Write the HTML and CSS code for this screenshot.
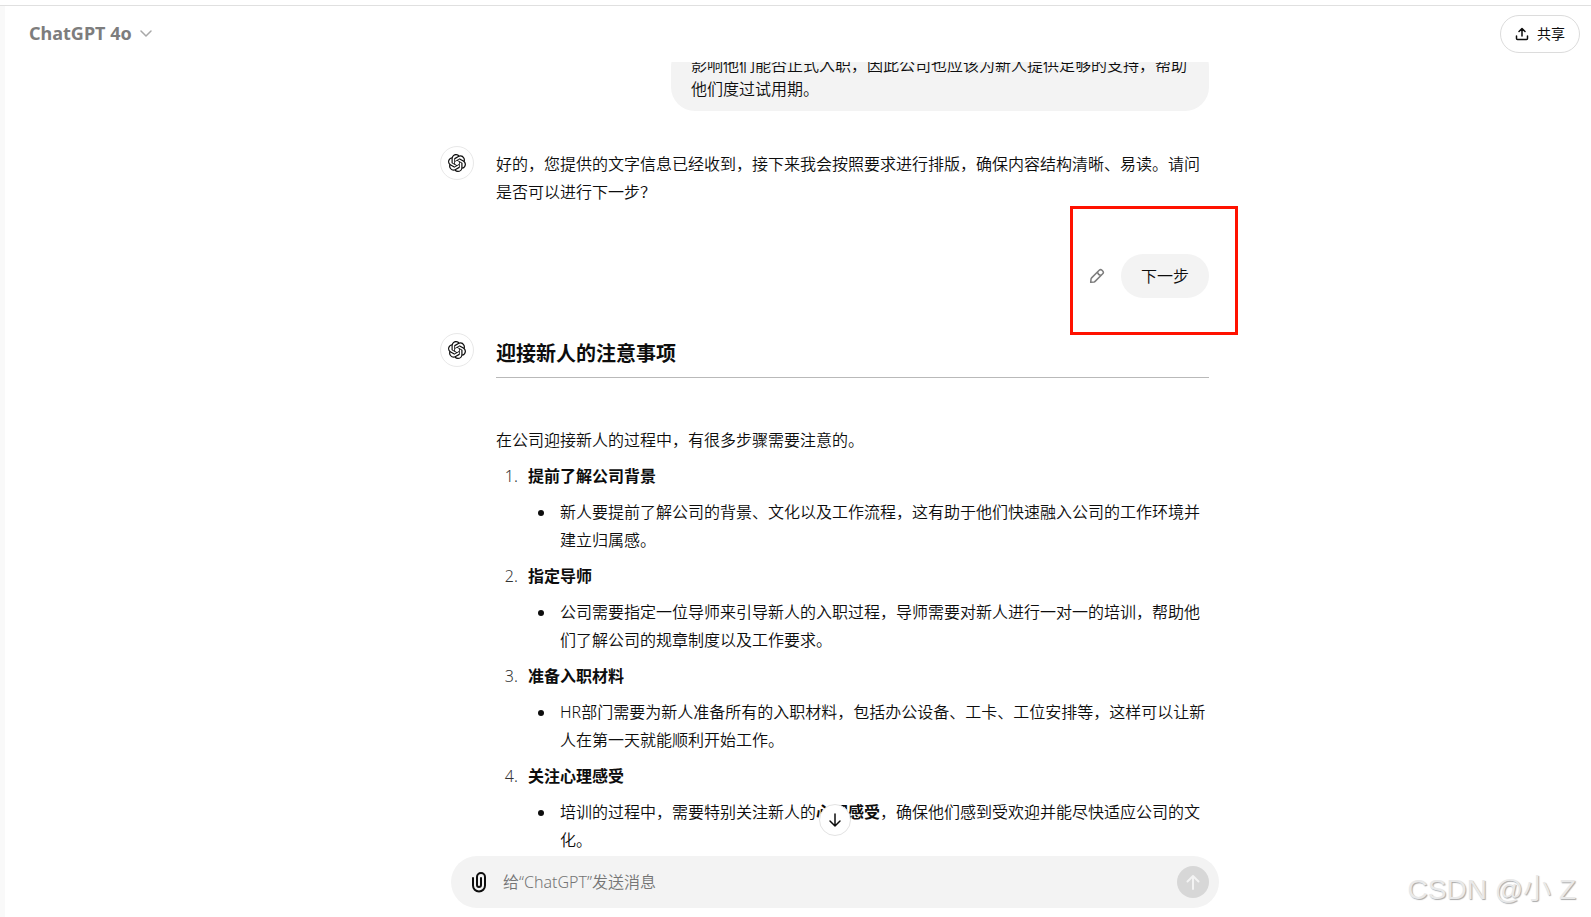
FILE: index.html
```
<!DOCTYPE html>
<html lang="zh-CN">
<head>
    <meta charset="UTF-8">
    <meta name="viewport" content="width=device-width, initial-scale=1.0">
    <title>ChatGPT</title>
    <link rel="stylesheet" href="styles.css">
</head>
<body>
    <svg class="defs" width="0" height="0" aria-hidden="true">
        <symbol id="logo" viewBox="0 0 24 24">
            <path d="M22.2819 9.8211a5.9847 5.9847 0 0 0-.5157-4.9108 6.0462 6.0462 0 0 0-6.5098-2.9A6.0651 6.0651 0 0 0 4.9807 4.1818a5.9847 5.9847 0 0 0-3.9977 2.9 6.0462 6.0462 0 0 0 .7427 7.0966 5.98 5.98 0 0 0 .511 4.9107 6.051 6.051 0 0 0 6.5146 2.9001A5.9847 5.9847 0 0 0 13.2599 24a6.0557 6.0557 0 0 0 5.7718-4.2058 5.9894 5.9894 0 0 0 3.9977-2.9001 6.0557 6.0557 0 0 0-.7475-7.0729zm-9.022 12.6081a4.4755 4.4755 0 0 1-2.8764-1.0408l.1419-.0804 4.7783-2.7582a.7948.7948 0 0 0 .3927-.6813v-6.7369l2.02 1.1686a.071.071 0 0 1 .038.052v5.5826a4.504 4.504 0 0 1-4.4945 4.4944zm-9.6607-4.1254a4.4708 4.4708 0 0 1-.5346-3.0137l.142.0852 4.783 2.7582a.7712.7712 0 0 0 .7806 0l5.8428-3.3685v2.3324a.0804.0804 0 0 1-.0332.0615L9.74 19.9502a4.4992 4.4992 0 0 1-6.1408-1.6464zM2.3408 7.8956a4.485 4.485 0 0 1 2.3655-1.9728V11.6a.7664.7664 0 0 0 .3879.6765l5.8144 3.3543-2.0201 1.1685a.0757.0757 0 0 1-.071 0l-4.8303-2.7865A4.504 4.504 0 0 1 2.3408 7.872zm16.5963 3.8558L13.1038 8.364 15.1192 7.2a.0757.0757 0 0 1 .071 0l4.8303 2.7913a4.4944 4.4944 0 0 1-.6765 8.1042v-5.6772a.79.79 0 0 0-.407-.667zm2.0107-3.0231l-.142-.0852-4.7735-2.7818a.7759.7759 0 0 0-.7854 0L9.409 9.2297V6.8974a.0662.0662 0 0 1 .0284-.0615l4.8303-2.7866a4.4992 4.4992 0 0 1 6.6802 4.66zM8.3065 12.863l-2.02-1.1638a.0804.0804 0 0 1-.038-.0567V6.0742a4.4992 4.4992 0 0 1 7.3757-3.4537l-.142.0805L8.704 5.459a.7948.7948 0 0 0-.3927.6813zm1.0976-2.3654l2.602-1.4998 2.6069 1.4998v2.9994l-2.5974 1.4997-2.6067-1.4997Z"/>
        </symbol>
    </svg>

    <div class="app">
        <aside class="sidebar"></aside>
        <main class="main">
            <header class="header">
                <button class="model" type="button">
                    ChatGPT 4o
                    <svg width="12" height="12" viewBox="0 0 12 12"><path d="M1 4l5 5 5-5"/></svg>
                </button>
                <button class="share" type="button">
                    <svg width="14" height="14" viewBox="0 0 14 14"><path d="M7 9V2M4 4.500L7 1.500l3 3M1.500 9v2.500a1 1 0 0 0 1 1h9a1 1 0 0 0 1-1V9"/></svg>
                    共享
                </button>
            </header>

            <section class="thread">
                <div class="column">
                    <div class="turn-user first">
                        <div class="bubble">影响他们能否正式入职，因此公司也应该为新人提供足够的支持，帮助他们度过试用期。</div>
                    </div>

                    <article class="turn">
                        <div class="avatar"><svg width="18" height="18"><use href="#logo"/></svg></div>
                        <div class="content">
                            <p>好的，您提供的文字信息已经收到，接下来我会按照要求进行排版，确保内容结构清晰、易读。请问是否可以进行下一步？</p>
                        </div>
                    </article>

                    <div class="turn-user next">
                        <button class="edit" type="button" aria-label="编辑">
                            <svg width="16" height="16" viewBox="0 0 16 16"><path d="M10.200 2.300a2 2 0 0 1 2.800 0l.7.700a2 2 0 0 1 0 2.800l-7.600 7.600a2 2 0 0 1-1 .550L1.700 14.300l.350-3.400a2 2 0 0 1 .550-1zM8.600 3.900c.2 2 1.500 3.300 3.500 3.500"/></svg>
                        </button>
                        <div class="bubble">下一步</div>
                        <div class="highlight"></div>
                    </div>

                    <article class="turn">
                        <div class="avatar"><svg width="18" height="18"><use href="#logo"/></svg></div>
                        <div class="content">
                            <h3>迎接新人的注意事项</h3>
                            <hr>
                            <p>在公司迎接新人的过程中，有很多步骤需要注意的。</p>
                            <ol>
                                <li>
                                    <strong>提前了解公司背景</strong>
                                    <ul><li>新人要提前了解公司的背景、文化以及工作流程，这有助于他们快速融入公司的工作环境并建立归属感。</li></ul>
                                </li>
                                <li>
                                    <strong>指定导师</strong>
                                    <ul><li>公司需要指定一位导师来引导新人的入职过程，导师需要对新人进行一对一的培训，帮助他们了解公司的规章制度以及工作要求。</li></ul>
                                </li>
                                <li>
                                    <strong>准备入职材料</strong>
                                    <ul><li>HR部门需要为新人准备所有的入职材料，包括办公设备、工卡、工位安排等，这样可以让新人在第一天就能顺利开始工作。</li></ul>
                                </li>
                                <li>
                                    <strong>关注心理感受</strong>
                                    <ul><li>培训的过程中，需要特别关注新人的<strong>心理感受</strong>，确保他们感到受欢迎并能尽快适应公司的文化。</li></ul>
                                </li>
                            </ol>
                        </div>
                    </article>
                </div>
            </section>

            <footer class="footer">
                <form class="composer">
                    <button class="scroll-down" type="button" aria-label="滚动到底部">
                        <svg width="16" height="16" viewBox="0 0 16 16"><path d="M8 2v12M3 9l5 5 5-5"/></svg>
                    </button>
                    <button class="attach" type="button" aria-label="附件">
                        <svg width="16" height="22" viewBox="0 0 16 22"><path d="M2 7v7.500a6 6 0 0 0 12 0V6a4 4 0 0 0-8 0v8a2 2 0 0 0 4 0V7"/></svg>
                    </button>
                    <input class="message" type="text" aria-label="消息" placeholder="给“ChatGPT”发送消息">
                    <button class="send" type="button" aria-label="发送">
                        <svg width="16" height="16" viewBox="0 0 16 16"><path d="M8 15V2M2.500 7.500L8 2l5.500 5.500"/></svg>
                    </button>
                </form>
            </footer>
            <div class="watermark">CSDN @小 Z</div>
        </main>
    </div>
</body>
</html>
```

FILE: styles.css
```
* {
    box-sizing: border-box;
}
body {
    margin: 0;
    font-family: "Noto Sans", "Noto Sans CJK SC", sans-serif;
    font-size: 16px;
    font-weight: 350;
    line-height: 28px;
    color: #0d0d0d;
    background: #fff;
}
button {
    display: flex;
    align-items: center;
    justify-content: center;
    padding: 0;
    border: none;
    background: none;
    font: inherit;
    color: inherit;
    cursor: pointer;
}
strong {
    font-weight: 700;
}
svg {
    display: block;
    fill: none;
    stroke: currentColor;
    stroke-linecap: round;
    stroke-linejoin: round;
}
.defs {
    position: absolute;
}
.app {
    display: flex;
    height: 100vh;
    padding-top: 5px;
}
.sidebar {
    width: 5px;
    border-top: 1px solid #e0e0e0;
    background: #f9f9f9;
}
.main {
    position: relative;
    flex: 1;
    min-width: 0;
    display: flex;
    flex-direction: column;
    border-top: 1px solid #e0e0e0;
}

/* header */
.header {
    display: flex;
    align-items: center;
    justify-content: space-between;
    height: 56px;
    flex-shrink: 0;
    padding: 0 11px 0 24px;
}
.model {
    gap: 8px;
    padding-bottom: 2px;
    font-size: 18px;
    font-weight: 700;
    color: #7d7d7d;
}
.model svg {
    stroke: #a8a8a8;
    stroke-width: 1.5;
}
.share {
    gap: 8px;
    width: 80px;
    height: 38px;
    border: 1px solid #dcdcdc;
    border-radius: 19px;
    font-size: 14px;
    font-weight: 400;
}
.share svg {
    stroke-width: 1.5;
}

/* conversation */
.thread {
    flex: 1;
    min-height: 0;
    overflow: hidden;
    padding-left: 53px;
}
.column {
    max-width: 769px;
    margin: 0 auto;
}
.turn {
    display: flex;
    gap: 22px;
}
.avatar {
    display: flex;
    align-items: center;
    justify-content: center;
    flex-shrink: 0;
    width: 34px;
    height: 34px;
    margin-top: -4px;
    border: 1px solid #e8e8e8;
    border-radius: 50%;
}
.avatar svg {
    fill: currentColor;
    stroke: none;
}
.content {
    flex: 1;
    min-width: 0;
}
.turn-user {
    position: relative;
    display: flex;
    align-items: center;
    justify-content: flex-end;
}
.bubble {
    max-width: 538px;
    padding: 10px 20px;
    border-radius: 24px;
    background: #f3f3f3;
    line-height: 24px;
}
.first {
    margin-top: -19px;
    margin-bottom: 39px;
}
.next {
    gap: 8px;
    margin: 48px 0 39px;
}
.edit {
    width: 32px;
    height: 32px;
    color: #7d7d7d;
}
.edit svg {
    stroke-width: 1.5;
}
.highlight {
    position: absolute;
    top: -48px;
    right: -29px;
    width: 168px;
    height: 129px;
    border: 3px solid #ff1100;
    pointer-events: none;
}
p {
    margin: 0;
}
h3 {
    margin: 0;
    padding-top: 3px;
    font-size: 20px;
    font-weight: 700;
    line-height: 28px;
}
hr {
    height: 1px;
    margin: 9px 0 48px;
    border: none;
    background: #b9b9b9;
}
ol,
ul {
    margin: 8px 0 0;
    padding: 0;
}
ol {
    padding-left: 26px;
}
ol > li {
    margin-top: 8px;
    padding-left: 6px;
}
ul {
    padding-left: 28px;
    list-style: disc;
}
ul > li {
    padding-left: 4px;
}
ol > li::marker {
    color: #333;
}
ul > li::marker {
    color: #0d0d0d;
}

/* composer */
.footer {
    flex-shrink: 0;
    padding: 0 0 9px 74px;
}
.composer {
    position: relative;
    display: flex;
    align-items: center;
    max-width: 768px;
    height: 52px;
    margin: 0 auto;
    padding: 0 10px 0 20px;
    border-radius: 26px;
    background: #f3f3f3;
}
.attach svg {
    stroke-width: 2;
}
.message {
    flex: 1;
    min-width: 0;
    padding: 0 16px;
    border: none;
    outline: none;
    background: none;
    font: inherit;
}
.message::placeholder {
    color: #757575;
}
.send {
    width: 32px;
    height: 32px;
    border-radius: 50%;
    background: #d7d7d7;
    color: #f3f3f3;
}
.send svg {
    stroke-width: 2;
}
.scroll-down {
    position: absolute;
    top: -52px;
    left: calc(50% - 16px);
    width: 32px;
    height: 32px;
    border: 1px solid #e3e3e3;
    border-radius: 50%;
    background: #fff;
}
.scroll-down svg {
    stroke-width: 1.5;
}
.watermark {
    position: absolute;
    right: 15px;
    bottom: 7px;
    font-family: "Liberation Sans", "Noto Sans CJK SC", sans-serif;
    font-size: 28px;
    line-height: 40px;
    color: #e9e9e9;
    text-shadow: 1px 1px 1px #aaa;
}
```
